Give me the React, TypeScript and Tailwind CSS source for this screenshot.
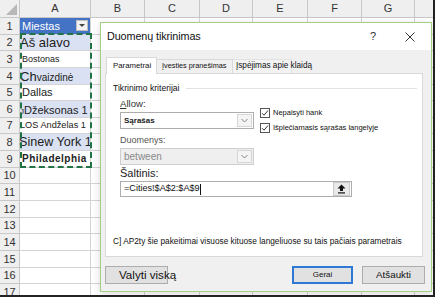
import React from "react";

const cols = [
  { label: "B", w: "w-[54px]" },
  { label: "C", w: "w-[55px]" },
  { label: "D", w: "w-[53px]" },
  { label: "E", w: "w-[55px]" },
  { label: "F", w: "w-[54px]" },
  { label: "G", w: "w-[53px]" },
];

const cities: React.ReactNode[] = [
  <span className="text-[13px] leading-none">Aš alavo</span>,
  <span className="pl-[2px] text-[9px] leading-none">Bostonas</span>,
  <span className="leading-none">
    <span className="text-[13px]">Ch</span>
    <span className="text-[10px]">vaizdinė</span>
  </span>,
  <span className="pl-[2px] text-[11px] leading-none">Dallas</span>,
  <span className="leading-none">
    <span className="text-[8px]">J</span>
    <span className="text-[11px]">Džeksonas 1</span>
  </span>,
  <span className="text-[9.2px] leading-none">LOS Andželas 1</span>,
  <span className="-ml-[1px] text-[12.6px] leading-none">Sinew York 1</span>,
  <span className="pl-[2px] text-[10px] font-semibold tracking-[0.5px] leading-none">Philadelphia</span>,
];

function Sheet() {
  const rows = Array.from({ length: 17 }, (_, i) => i + 1);
  return (
    <div className="flex flex-col font-['Liberation_Sans',Arial,sans-serif] text-[#222]">
      {/* column headers */}
      <div className="flex h-[18px] bg-[#efefef] border-b border-[#c8c8c8]">
        <div className="relative w-[20px] border-r border-[#c8c8c8]">
          <div className="absolute right-[2px] bottom-[2px] w-0 h-0 border-l-[11px] border-l-transparent border-b-[11px] border-b-[#b8b8b8]" />
        </div>
        <div className="w-[71px] border-r border-[#c8c8c8] flex items-center justify-center text-[11px] text-[#333]">A</div>
        {cols.map((c) => (
          <div key={c.label} className={`${c.w} border-r border-[#c8c8c8] flex items-center justify-center text-[11px] text-[#333]`}>
            {c.label}
          </div>
        ))}
        <div className="flex-1" />
      </div>

      {rows.map((r) => {
        const isHeader = r === 1;
        const city = r >= 2 && r <= 9 ? cities[r - 2] : null;
        const band = r >= 2 && r <= 9 && r % 2 === 0;
        return (
          <div key={r} className="flex h-[16.65px]">
            <div className="w-[20px] bg-[#efefef] border-r border-b border-[#c8c8c8] flex items-center justify-center text-[11px] text-[#333]">
              {r}
            </div>
            {isHeader ? (
              <div className="w-[71px] bg-[#4472c4] border-r border-b border-[#d4d4d4] flex items-center pl-[2px] text-[11px] text-white">
                Miestas
                <div className="ml-auto mr-[2px] w-[12px] h-[11px] bg-[#f2f2f2] border border-[#bfbfbf] flex items-center justify-center">
                  <div className="w-0 h-0 border-l-[3px] border-l-transparent border-r-[3px] border-r-transparent border-t-[3px] border-t-[#444]" />
                </div>
              </div>
            ) : (
              <div className={`w-[71px] border-r border-b border-[#d4d4d4] flex items-center overflow-visible whitespace-nowrap ${band ? "bg-[#d9e1f2]" : "bg-white"}`}>
                {city}
              </div>
            )}
            {cols.map((c) => (
              <div key={c.label} className={`${c.w} border-r border-b border-[#d4d4d4]`} />
            ))}
            <div className="flex-1 border-b border-[#d4d4d4]" />
          </div>
        );
      })}
    </div>
  );
}

function Check({ label }: { label: string }) {
  return (
    <div className="flex items-center h-[10px]">
      <div className="w-[10px] h-[10px] border border-[#555] bg-white flex items-center justify-center">
        <svg width="8" height="8" viewBox="0 0 8 8">
          <path d="M1 4.2 L3 6.2 L7 1.5" fill="none" stroke="#333" strokeWidth="1" />
        </svg>
      </div>
      <span className="ml-[3px] text-[7.5px] text-[#111]">{label}</span>
    </div>
  );
}

function Select({ value, disabled }: { value: string; disabled?: boolean }) {
  return (
    <div className={`h-[17px] w-[134px] border flex items-center ${disabled ? "bg-[#efefef] border-[#cfcfcf]" : "bg-white border-[#adadad]"}`}>
      <span className={disabled ? "pl-[3px] text-[10px] text-[#8a8a8a]" : "pl-[3px] text-[8px] font-semibold text-[#222]"}>{value}</span>
      <div className="ml-auto mr-[1px] w-[15px] h-[13px] border border-[#d6d6d6] bg-[#f4f4f4] flex items-center justify-center">
        <svg width="7" height="5" viewBox="0 0 7 5">
          <path d="M0.5 1 L3.5 4 L6.5 1" fill="none" stroke="#7a7a7a" strokeWidth="0.9" />
        </svg>
      </div>
    </div>
  );
}

function Dialog() {
  return (
    <div className="absolute left-[100px] top-[22px] w-[332px] h-[270px] border border-[#a3cf82] bg-[#f0f0f0] flex flex-col font-['Liberation_Sans',Arial,sans-serif] text-[#111] shadow-[0_2px_8px_rgba(0,0,0,0.15)]">
      {/* title bar */}
      <div className="h-[27px] bg-white flex items-center pl-[6px]">
        <span className="text-[10.8px] tracking-[-0.1px]">Duomenų tikrinimas</span>
        <span className="ml-auto text-[11px] text-[#333]">?</span>
        <svg className="ml-[29px] mr-[16px]" width="10" height="10" viewBox="0 0 10 10">
          <path d="M0.5 0.5 L9.5 9.5 M9.5 0.5 L0.5 9.5" stroke="#333" strokeWidth="1" />
        </svg>
      </div>

      {/* tabs */}
      <div className="pl-[4px] pt-[6px]">
        <div className="flex items-end h-[17px] pl-[1px]">
          <div className="h-[17px] w-[51px] bg-white border border-b-0 border-[#d9d9d9] flex items-center pl-[6px] text-[7.8px] relative z-10 -mb-px">
            Parametrai
          </div>
          <div className="h-[14px] w-[76px] bg-[#f0f0f0] border border-b-0 border-l-0 border-[#d9d9d9] flex items-center pl-[5px] text-[7.3px] whitespace-nowrap">
            Įvesties pranešimas
          </div>
          <div className="h-[14px] w-[59px] bg-[#f3f3f3] border border-b-0 border-l-0 border-[#e2e2e2] flex items-center pl-[3px] text-[8.2px] whitespace-nowrap overflow-visible">
            Įspėjimas apie klaidą
          </div>
        </div>

        {/* panel */}
        <div className="h-[184px] w-[318px] bg-white border border-[#d9d9d9] flex flex-col">
          <div className="mt-[9px] h-[10px] flex items-center pl-[7px]">
            <span className="text-[8.6px] whitespace-nowrap">Tikrinimo kriterijai</span>
            <div className="ml-[6px] mr-[5px] flex-1 h-px bg-[#e3e3e3]" />
          </div>

          <div className="flex pl-[14px]">
            <div className="flex flex-col w-[134px]">
              <div className="mt-[5px] h-[12px] flex items-center text-[9.6px] text-[#333]">
                <span className="underline">A</span>llow:
              </div>
              <div className="mt-[2px]">
                <Select value="Sąrašas" />
              </div>
              <div className="mt-[6px] h-[12px] flex items-center text-[9px] text-[#555]">Duomenys:</div>
              <div className="mt-[1px]">
                <Select value="between" disabled />
              </div>
            </div>
            <div className="ml-[6px] mt-[15px] flex flex-col gap-[4.5px]">
              <Check label="Nepaisyti hank" />
              <Check label="Išplečiamasis sąrašas langelyje" />
            </div>
          </div>

          <div className="pl-[14px] mt-[1px] h-[14px] flex items-center text-[11px] text-[#222]">Šaltinis:</div>
          <div className="ml-[14px] mt-[1px] h-[16px] w-[232px] border border-[#adadad] bg-white flex items-center">
            <span className="pl-[3px] text-[9.1px] text-[#111]">=Cities!$A$2:$A$9</span>
            <div className="w-px h-[11px] bg-[#111]" />
            <div className="ml-auto mr-[1px] w-[17px] h-[14px] bg-[#e9e9e9] border border-[#c9c9c9] flex items-center justify-center">
              <svg width="9" height="10" viewBox="0 0 9 10">
                <path d="M4.5 0.5 L8.5 4.5 L6 4.5 L6 7 L3 7 L3 4.5 L0.5 4.5 Z" fill="#111" />
                <rect x="1" y="8.3" width="7" height="1.2" fill="#111" />
              </svg>
            </div>
          </div>

          <div className="mt-[38px] h-[12px] pl-[7px] flex items-center text-[8.3px] whitespace-nowrap">
            C] AP2ty šie pakeitimai visuose kituose langeliuose su tais pačiais parametrais
          </div>
        </div>
      </div>

      {/* buttons */}
      <div className="mt-[9px] flex pl-[4px]">
        <div className="h-[18px] w-[63px] bg-[#e1e1e1] border border-[#adadad] flex items-center pl-[13px] text-[11.6px] whitespace-nowrap overflow-visible">
          Valyti viską
        </div>
        <div className="ml-auto h-[18px] w-[61px] bg-[#e1e1e1] border-2 border-[#2f78d4] flex items-center justify-center text-[8px]">
          Gerai
        </div>
        <div className="ml-[9px] mr-[6px] h-[18px] w-[63px] bg-[#e1e1e1] border border-[#adadad] flex items-center justify-center text-[9.8px]">
          Atšaukti
        </div>
      </div>
    </div>
  );
}

export default function App() {
  return (
    <div className="relative w-[435px] h-[297px] overflow-hidden bg-white">
      <Sheet />
      {/* copy marquee round A2:A9 */}
      <div className="absolute left-[20px] top-[33px] w-[72px] h-[135px] border-2 border-dashed border-[#217346]" />
      <Dialog />
      <div className="absolute right-0 top-0 w-[2px] h-full bg-[#222]" />
      <div className="absolute left-0 bottom-0 w-full h-[2px] bg-[#222]" />
    </div>
  );
}
